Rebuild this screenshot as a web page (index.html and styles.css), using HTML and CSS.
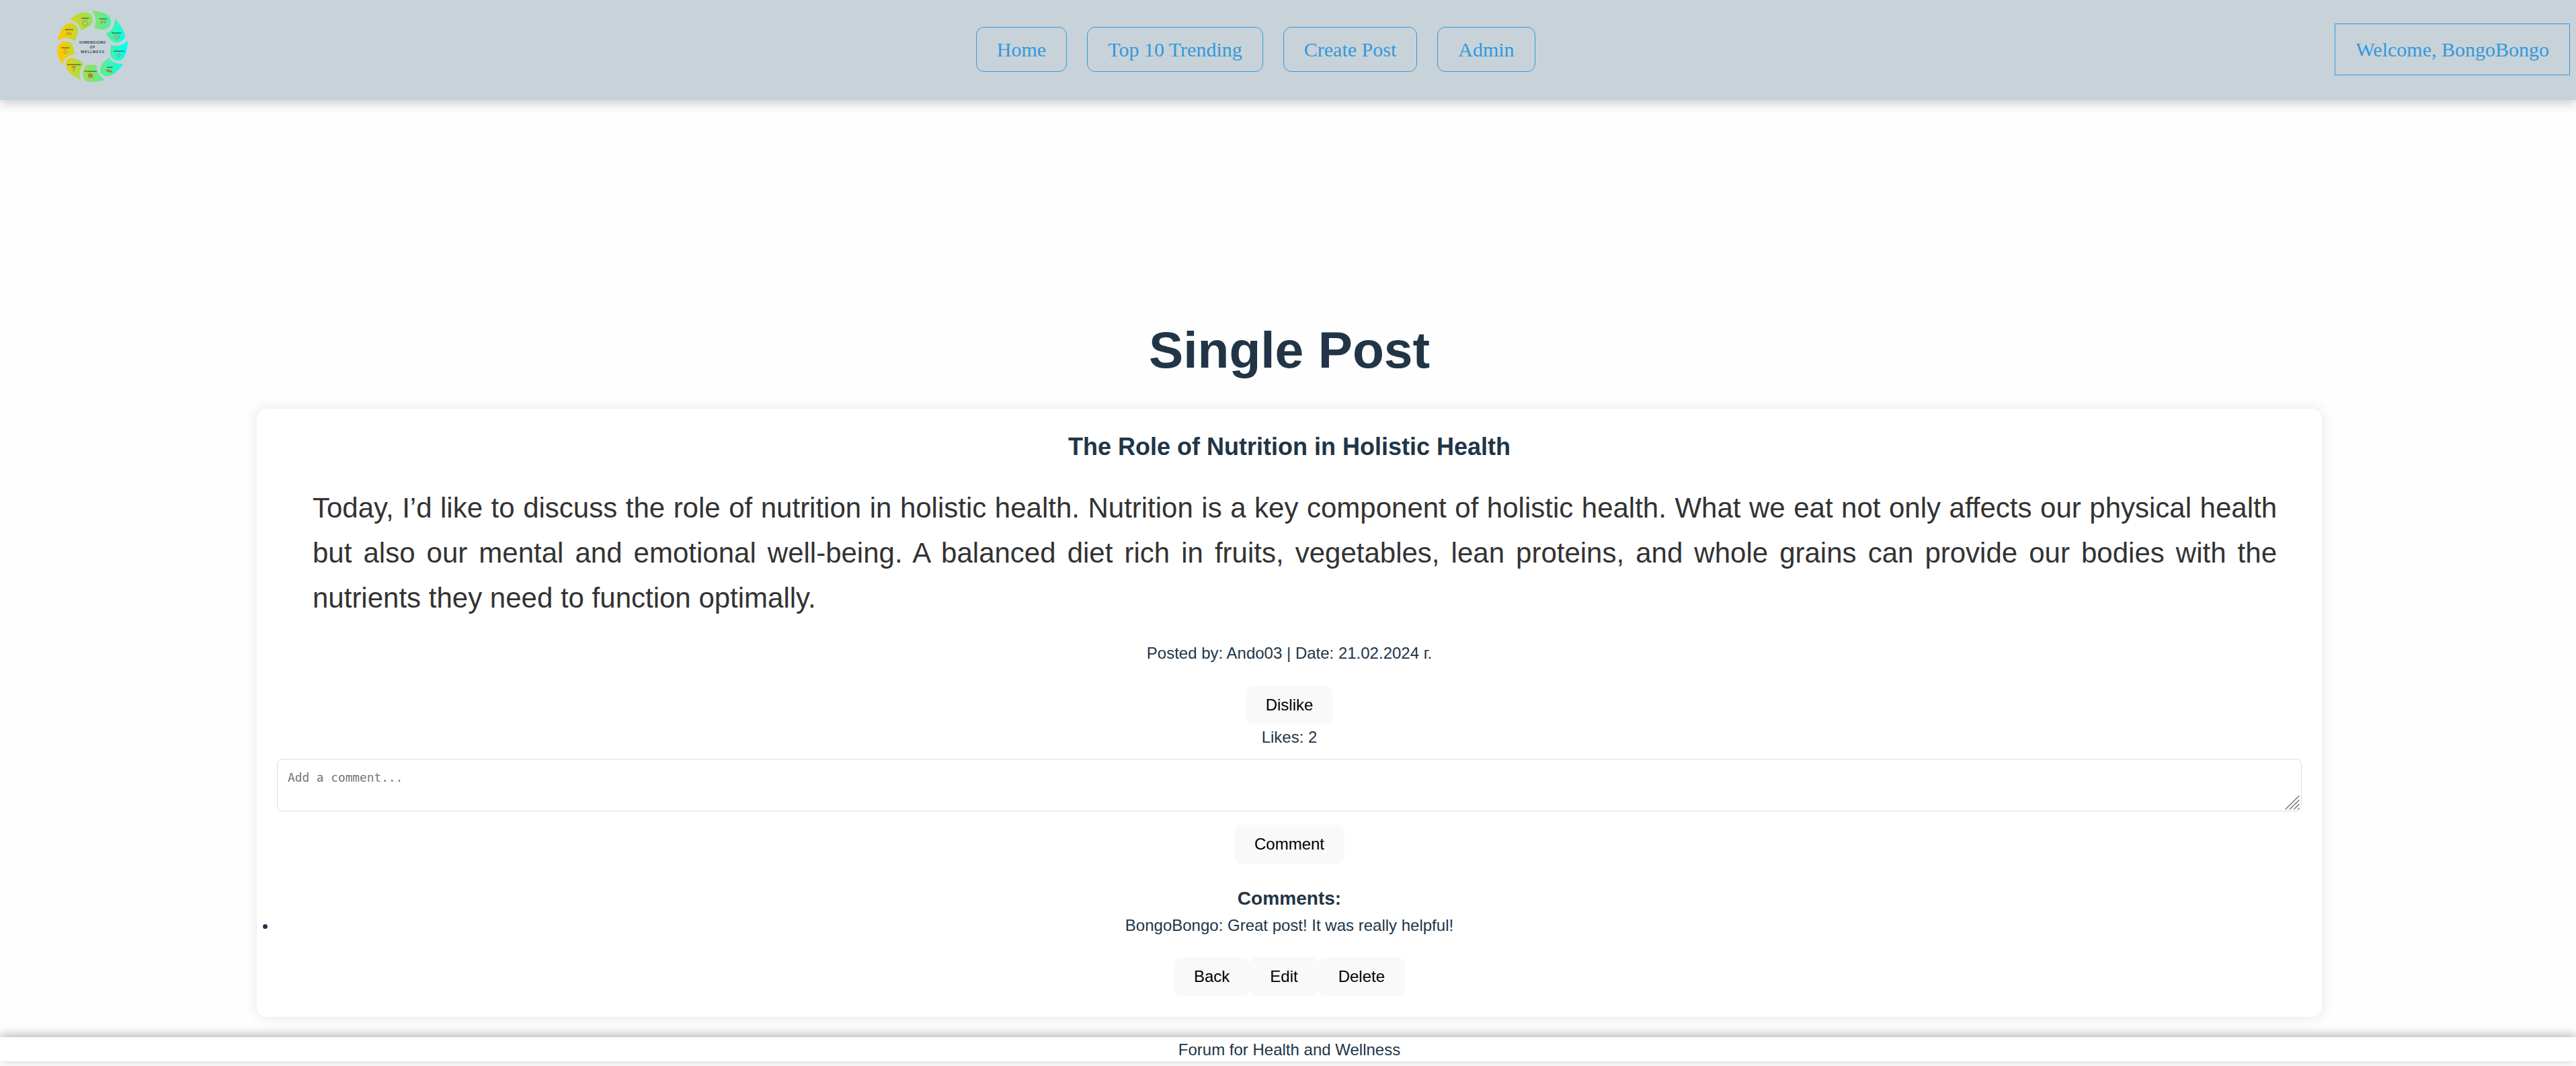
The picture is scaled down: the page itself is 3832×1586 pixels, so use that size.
FILE: index.html
```html
<!DOCTYPE html>
<html lang="en">
<head>
<meta charset="utf-8">
<title>Single Post</title>
<link rel="stylesheet" href="styles.css">
</head>
<body>
<header class="header">
  <svg class="logo" viewBox="0 0 160 147" role="img" aria-label="Dimensions of Wellness">
    <defs>
      <linearGradient id="wheel" gradientUnits="userSpaceOnUse" x1="30" y1="66" x2="126" y2="72">
        <stop offset="0" stop-color="#ffc800"/>
        <stop offset=".22" stop-color="#c8d72c"/>
        <stop offset=".5" stop-color="#86e36a"/>
        <stop offset=".75" stop-color="#4cf0a5"/>
        <stop offset="1" stop-color="#00ffee"/>
      </linearGradient>
    </defs>
    <g fill="url(#wheel)">
      <path d="M43.500 29C51 23 58 18 66 18C73 18 78 23 78 30C77 37 72 41 61 45C58 37 53 31 43.500 29Z"/>
      <path d="M77 16C87 16 97 19 102 24C107 30 106 37 101 41C95 46 87 44 80 41C84 33 83 24 77 16Z"/>
      <path d="M111 28C118 35 125 45 126 53C125 60 119 64 112 63C105 61 101 56 98 50C106 46 111 38 111 28Z"/>
      <path d="M130 60C130 70 128 79 124 86C119 92 109 91 105 84C103 79 104 74 105 67C114 70 123 68 130 60Z"/>
      <path d="M123.500 95C118 103 110 111 103 113C96 115 88 110 89 103C90 96 95 91 102 86C106 92 114 96 123.500 95Z"/>
      <path d="M95.700 118.500C85 122 73 123.500 67 119.500C61 114 63 104 67 97.500C73 96 79 96.500 84 97C83.500 106 88 114 95.700 118.500Z"/>
      <path d="M60 118.500C50 114 40 107 38 99C36 92 40 87 46 86C53 87 60 90 65 95.500C59 101 57 109 60 118.500Z"/>
      <path d="M32.700 96C27 87 24 78 26 70C29 62 37 59.500 44 63C50 67 49 74 52 81C43 81 35 87 32.700 96Z"/>
      <path d="M26 60.500C27 51 32 41 38 36.500C45 32.500 53 35 56 42C57 49 54 55 50.700 61.500C44 55 35 55 26 60.500Z"/>
    </g>
    <g class="logo-title">
      <text x="77.500" y="64.500" textLength="39">DIMENSIONS</text>
      <text x="77.500" y="71.500" textLength="8">OF</text>
      <text x="77.500" y="78.800" textLength="35">WELLNESS</text>
    </g>
    <g class="logo-label">
      <text x="66.300" y="28.300" textLength="11">Cultural</text>
      <text x="93.700" y="29.300" textLength="11">Physical</text>
      <text x="113.500" y="50.300" textLength="14">Emotional</text>
      <text x="117.300" y="77" textLength="16">Intellectual</text>
      <text x="103.500" y="101.300" textLength="8">Social</text>
      <text x="74.500" y="107.300" textLength="18">Occupational</text>
      <text x="50" y="97" textLength="20">Environmental</text>
      <text x="37.300" y="71.700" textLength="12">Financial</text>
      <text x="42.700" y="45.300" textLength="12">Spiritual</text>
    </g>
    <g class="logo-line">
      <circle cx="66.300" cy="34.500" r="3.800"/>
      <path d="M109 54q2-4 4.500-1q3-3 4.500 1q0 3-4.500 5q-4.500-2-4.500-5zM111 55h5"/>
      <circle cx="117" cy="81.500" r="2"/><path d="M116 85.500h2M112.500 81.500h1M120.500 81.500h1"/>
      <path d="M38.500 51q1-3 4-3q3 0 4 3zM42.500 48v3"/>
      <circle cx="37.500" cy="77.500" r="2.300"/><path d="M36 73.500h3"/>
    </g>
    <g class="logo-solid">
      <path d="M90 31h1.500v1.500h4V31H97v4h-1.500v-1.500h-4V35H90z"/>
      <path d="M98 103h3v1l4 0v1h2v3h-4v-1h-4z"/>
      <path d="M71 110h2v-1.200h3v1.200h2v5.500h-7z"/>
      <path d="M46.500 99q3-2 4 0q3-1 3 1.500h-2.500l-1 6h-.8l.3-6h-3z"/>
    </g>
  </svg>
  <nav class="nav">
    <a class="nav-link">Home</a>
    <a class="nav-link">Top 10 Trending</a>
    <a class="nav-link">Create Post</a>
    <a class="nav-link">Admin</a>
  </nav>
  <a class="welcome">Welcome, BongoBongo</a>
</header>
<main class="main">
  <h1 class="title">Single Post</h1>
  <article class="post">
    <h2 class="post-title">The Role of Nutrition in Holistic Health</h2>
    <p class="post-body">Today, I’d like to discuss the role of nutrition in holistic health. Nutrition is a key component of holistic health. What we eat not only affects our physical health but also our mental and emotional well-being. A balanced diet rich in fruits, vegetables, lean proteins, and whole grains can provide our bodies with the nutrients they need to function optimally.</p>
    <p class="post-meta">Posted by: Ando03 | Date: 21.02.2024 г.</p>
    <button class="button">Dislike</button>
    <p class="likes">Likes: 2</p>
    <div class="comment-field">
      <textarea class="comment-input" placeholder="Add a comment..."></textarea>
      <svg class="grip" viewBox="0 0 22 22" aria-hidden="true">
        <path d="M.7 21.300L21.300.7M7 21.300L21.300 7M13.200 21.300L21.300 13.200M19.300 21.300L21.300 19.300"/>
      </svg>
    </div>
    <button class="button">Comment</button>
    <h3 class="comments-title">Comments:</h3>
    <ul class="comments">
      <li>BongoBongo: Great post! It was really helpful!</li>
    </ul>
    <div class="actions">
      <button class="button">Back</button>
      <button class="button">Edit</button>
      <button class="button">Delete</button>
    </div>
  </article>
</main>
<footer class="footer">Forum for Health and Wellness</footer>
</body>
</html>
```
FILE: styles.css
```css
* {
  box-sizing: border-box;
  margin: 0;
  padding: 0;
}

body {
  height: 1586px;
  overflow: hidden;
  background: #fefefe;
  color: #213547;
  font: 24px/27px "Liberation Sans", Arial, sans-serif;
}

.header {
  display: flex;
  align-items: center;
  justify-content: space-between;
  height: 149px;
  padding: 0 9px 2px 60px;
  background: #c7d3d9;
  box-shadow: 0 5px 15px rgba(0, 0, 0, 0.2);
  font: 30px/35px "Liberation Serif", "Times New Roman", serif;
  color: #3498db;
}

.logo {
  width: 160px;
  height: 147px;
  margin-right: 42px;
}

.logo-title {
  font: 5.5px "DejaVu Sans", sans-serif;
  fill: #25304a;
  stroke: #25304a;
  stroke-width: 0.15px;
  text-anchor: middle;
}

.logo-label {
  font: bold 2.8px "DejaVu Sans", sans-serif;
  fill: #123a35;
  text-anchor: middle;
}

.logo-line {
  fill: none;
  stroke: #b98a35;
  stroke-width: 0.9px;
}

.logo-solid {
  fill: #b98228;
}

.nav {
  display: flex;
  gap: 30px;
}

.nav-link {
  padding: 15px 30px;
  border: 1px solid #3498db;
  border-radius: 12px;
}

.welcome {
  padding: 20px 30px;
  border: 1px solid #3498db;
}

.main {
  width: 3072px;
  margin-left: 382px;
  padding-top: 327px;
  text-align: center;
}

.title {
  font-size: 76.8px;
  line-height: 88px;
}

.post {
  display: flex;
  flex-direction: column;
  align-items: center;
  height: 905px;
  margin-top: 44px;
  padding: 30px;
  background: #fff;
  border-radius: 15px;
  box-shadow: 0 0 20px rgba(0, 0, 0, 0.1);
}

.post-title {
  font-size: 36px;
  line-height: 54px;
}

.post-body {
  width: 2922px;
  margin: 30px 0 0 16px;
  color: #333;
  font-size: 42px;
  line-height: 67px;
  text-align: justify;
}

.post-meta {
  margin: 35px 0;
}

.button {
  padding: 15px 30px;
  border: 0;
  border-radius: 12px;
  background: #f9f9f9;
  color: #000;
  font: 24px/28px "Liberation Sans", Arial, sans-serif;
}

.likes {
  margin: 5px 0 19px;
}

.comment-field {
  position: relative;
  width: 100%;
  height: 78px;
  margin-bottom: 20px;
}

.comment-input {
  display: block;
  width: 100%;
  height: 78px;
  padding: 15px;
  border: 1px solid #ddd;
  border-radius: 8px;
  background: #fff;
  font: 17.8px/24px "DejaVu Sans Mono", monospace;
  resize: none;
}

.grip {
  position: absolute;
  right: 3px;
  bottom: 2px;
  width: 22px;
  height: 22px;
  fill: none;
  stroke: #777;
  stroke-width: 1.5px;
}

.comments-title {
  margin-top: 36px;
  font-size: 28.08px;
  line-height: 32px;
}

.comments {
  width: 100%;
  margin: 10px 0 34px;
}

.actions {
  display: flex;
}

.footer {
  height: 36px;
  margin-top: 30px;
  padding: 5px 0 0 4px;
  background: #fff;
  box-shadow: 0 -3px 15px rgba(0, 0, 0, 0.3);
  text-align: center;
}
```
